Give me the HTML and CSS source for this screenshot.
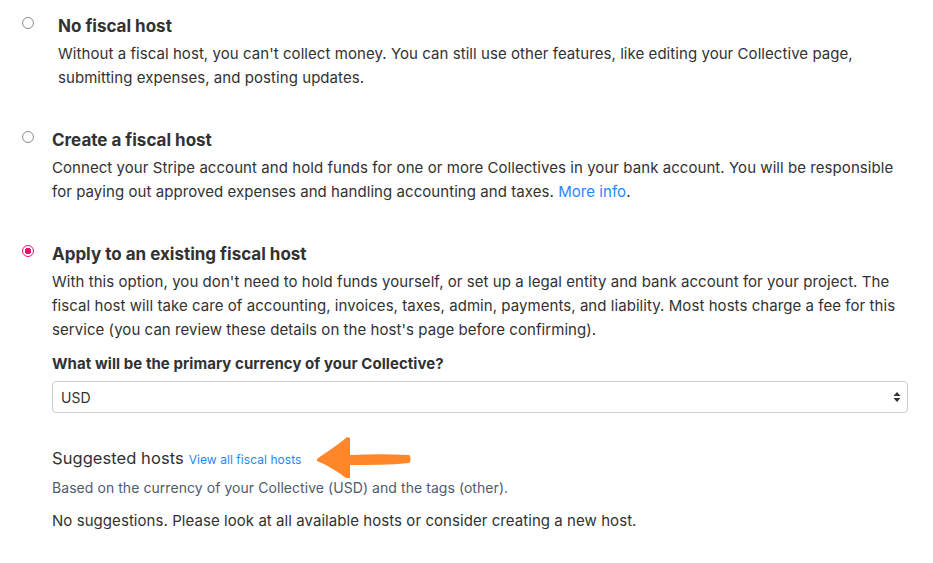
FILE: index.html
```html
<!DOCTYPE html>
<html>
<head>
<meta charset="utf-8">
<link rel="stylesheet" href="styles.css">
</head>
<body>
<div class="page">
  <div class="option option-first">
    <span class="radio"></span>
    <div class="content">
      <div class="title">No fiscal host</div>
      <p class="desc">Without a fiscal host, you can't collect money. You can still use other features, like editing your Collective page, submitting expenses, and posting updates.</p>
    </div>
  </div>
  <div class="option">
    <span class="radio"></span>
    <div class="content">
      <div class="title">Create a fiscal host</div>
      <p class="desc">Connect your Stripe account and hold funds for one or more Collectives in your bank account. You will be responsible for paying out approved expenses and handling accounting and taxes. <a class="link" href="#">More info</a>.</p>
    </div>
  </div>
  <div class="option">
    <span class="radio checked"></span>
    <div class="content">
      <div class="title">Apply to an existing fiscal host</div>
      <p class="desc">With this option, you don't need to hold funds yourself, or set up a legal entity and bank account for your project. The fiscal host will take care of accounting, invoices, taxes, admin, payments, and liability. Most hosts charge a fee for this service (you can review these details on the host's page before confirming).</p>
      <div class="label">What will be the primary currency of your Collective?</div>
      <div class="select">
        <span>USD</span>
        <svg class="caret" width="8" height="12" viewBox="0 0 8 12"><path d="M4 1 L7.5 5 H0.5 Z M4 11 L7.5 7 H0.5 Z" fill="#333"/></svg>
      </div>
      <div class="suggested">
        <span class="sugg-title">Suggested hosts</span>
        <a class="sugg-link" href="#">View all fiscal hosts</a>
        <svg class="arrow" width="97" height="44" viewBox="0 0 97 44">
          <path d="M2 23 C12 16 24 8 32 1 L35 2 L35 19 C55 18 75 18 94 19 C96 20 96 26 94 27 C75 29 55 29 35 29 L35 42 L31 42 C22 35 12 29 2 25 Z" fill="#ff8729"/>
        </svg>
      </div>
      <p class="based">Based on the currency of your Collective (USD) and the tags (other).</p>
      <p class="none">No suggestions. Please look at all available hosts or consider creating a new host.</p>
    </div>
  </div>
</div>
</body>
</html>
```
FILE: styles.css
```css
html, body {
  margin: 0;
  padding: 0;
  background: #fff;
}
body {
  font-family: Inter, "Noto Sans", sans-serif;
  color: #313233;
  letter-spacing: 0.06px;
}
.page {
  padding: 12px 25px 0 22px;
  width: 886px;
}
.option {
  display: flex;
  align-items: flex-start;
  margin-bottom: 36px;
}
.radio {
  flex: none;
  width: 10px;
  height: 10px;
  border: 1px solid #8a8a8a;
  border-radius: 50%;
  margin-top: 5px;
  margin-right: 18px;
  box-sizing: content-box;
}
.option-first .content {
  margin-left: 6px;
}
.radio.checked {
  border: 1px solid #e3126b;
  background: radial-gradient(circle, #e3126b 0 3px, #fff 3.5px);
}
.content {
  flex: 1;
}
.title {
  font-size: 17px;
  font-weight: 700;
  line-height: 29px;
  margin-bottom: 1px;
  letter-spacing: 0;
  color: #313233;
}
.desc {
  margin: 0;
  font-size: 15px;
  line-height: 24px;
}
.link {
  color: #1f87ff;
  text-decoration: none;
}
.label {
  margin-top: 11px;
  font-size: 15px;
  font-weight: 700;
  line-height: 22px;
}
.select {
  margin-top: 6px;
  height: 30px;
  border: 1px solid #cfcfcf;
  border-radius: 4px;
  display: flex;
  align-items: center;
  justify-content: space-between;
  padding: 0 6px 0 8px;
  font-size: 14px;
}
.suggested {
  margin-top: 30px;
  display: flex;
  align-items: center;
  height: 30px;
}
.sugg-title {
  font-size: 16.5px;
  line-height: 24px;
}
.sugg-link {
  font-size: 12px;
  color: #1f87ff;
  text-decoration: none;
  margin-left: 5px;
  margin-top: 2px;
}
.arrow {
  margin: -7px 0 -7px 13px;
  flex: none;
}
.based {
  margin: 5px 0 0;
  font-size: 14px;
  line-height: 20px;
  color: #4e5b6f;
}
.none {
  margin: 11px 0 0;
  font-size: 15px;
  line-height: 24px;
}
```
